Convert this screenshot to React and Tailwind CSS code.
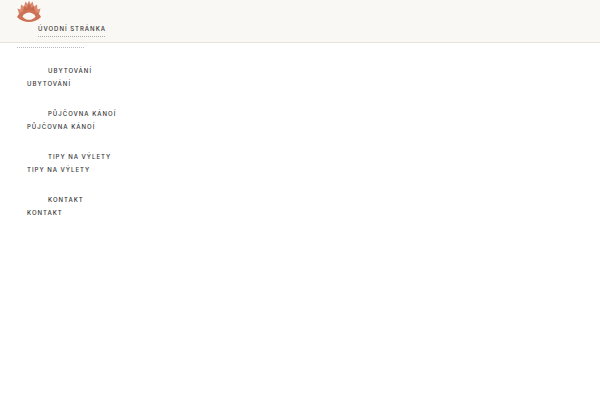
import React from 'react';

const items = ['Ubytování', 'Půjčovna kánoí', 'Tipy na výlety', 'Kontakt'];

const Logo = () => (
  <svg width="26" height="23" viewBox="0 0 26 23" fill="none">
    <path d="M3 14 L1.5 8.5 L4.5 9.5 L5 4.5 L8 6.5 L9.5 1.5 L11.5 4 L13 0.5 L14.5 4 L16.5 1.5 L18 6.5 L21 4.5 L21.5 9.5 L24.5 8.5 L23 14 Z" fill="#d98a70" />
    <path d="M7 11 L8.5 6 L10.5 8 L13 3.5 L15.5 8 L17.5 6 L19 11 Z" fill="#c9694c" />
    <path d="M1 17 C4 11.5 9 10 13 10 C17 10 22 11.5 25 17 C22 20.5 17 22 13 22 C9 22 4 20.5 1 17 Z" fill="#cd7255" />
    <path d="M6.5 16.5 C8 13.5 11 12.5 13 12.5 C15 12.5 18 13.5 19.5 16.5 C18 19 15.5 19.8 13 19.8 C10.5 19.8 8 19 6.5 16.5 Z" fill="#faf8f4" />
  </svg>
);

export default function App() {
  return (
    <div className="min-h-[400px] bg-white font-['Inter','Liberation_Sans',sans-serif] text-[6px] font-medium uppercase tracking-[1px] text-[#333]">
      <header className="h-[43px] border-b border-[#e6e3da] bg-[#faf8f4] pl-[16px]">
        <Logo />
        <div className="ml-[22px] mt-[1px] w-[67px] whitespace-nowrap border-b border-dotted border-[#aaa] pb-[3px] leading-[9px]">
          Úvodní stránka
        </div>
      </header>
      <div className="ml-[17px] mt-[4px] w-[67px] border-b border-dotted border-[#bbb]" />
      <ul className="mt-[19px] flex flex-col gap-[22px] pl-[27px] leading-[8px]">
        {items.map((item) => (
          <li key={item} className="flex flex-col gap-[5px]">
            <span className="pl-[21px]">{item}</span>
            <span>{item}</span>
          </li>
        ))}
      </ul>
    </div>
  );
}
